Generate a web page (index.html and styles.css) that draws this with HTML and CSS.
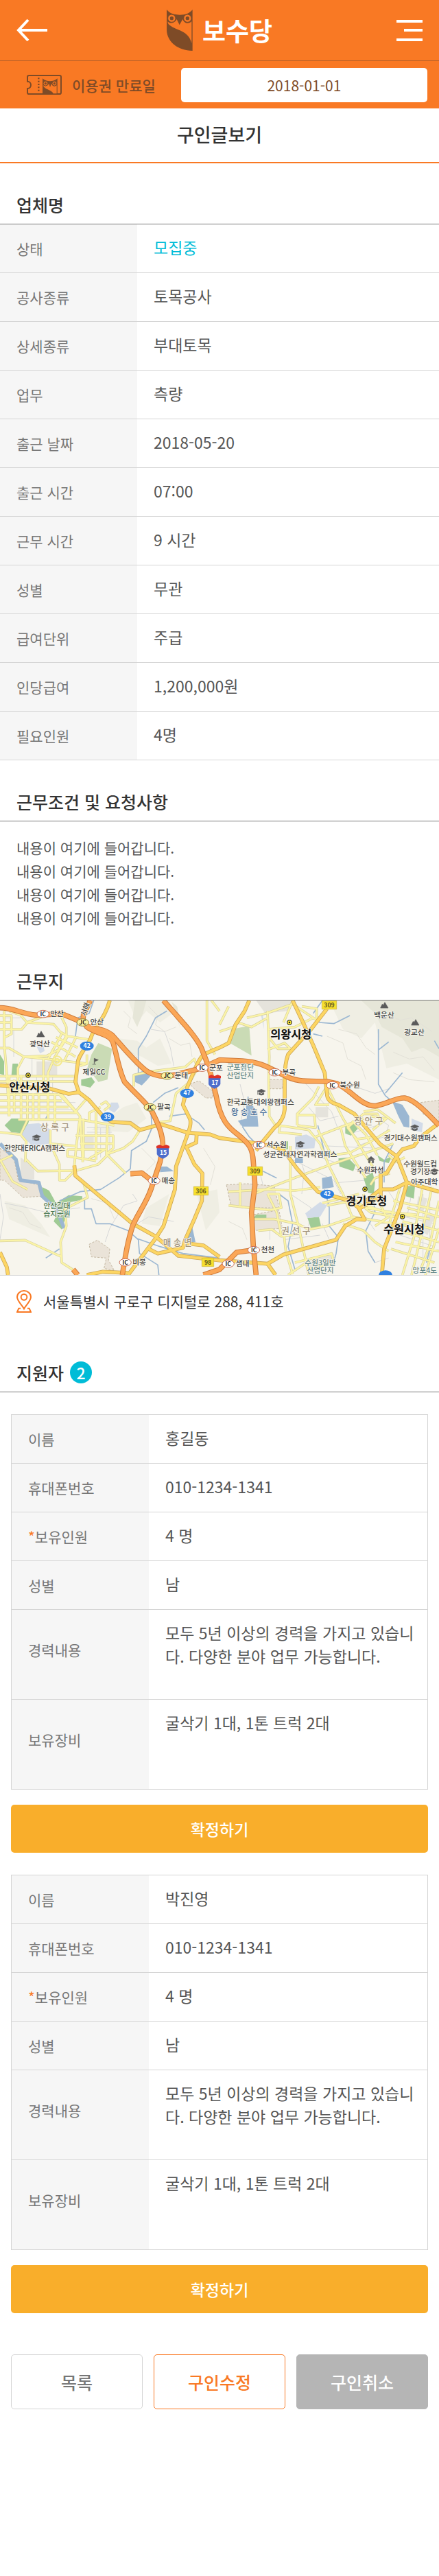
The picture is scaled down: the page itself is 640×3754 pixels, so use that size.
FILE: index.html
```html
<!DOCTYPE html>
<html lang="ko">
<head>
<meta charset="utf-8">
<meta name="viewport" content="width=device-width, initial-scale=1">
<title>구인글보기 - 보수당</title>
<link rel="stylesheet" href="styles.css">
</head>
<body>
<header class="site-header">
  <div class="topbar">
    <button class="icon-button" type="button" aria-label="뒤로">
      <svg class="icon-back" viewBox="0 0 45 34"><path d="M17 2 3 17l14 15M3 17h42"/></svg>
    </button>
    <a class="logo" href="#">
      <svg class="logo-owl" viewBox="0 0 114 180" aria-hidden="true">
        <g id="owl">
          <path class="brown" d="M0 0 C14 17 32 23 57 23 C82 23 99 17 113 0 V180 C45 180 0 137 0 88Z"/>
          <path class="orange" d="M4 52 C15 64 36 60 44 42 L56 67 L70 42 C76 62 98 64 109 51 V147 C96 92 43 90 20 73 C10 67 4 61 4 52Z"/>
          <circle class="eye" cx="22" cy="38" r="17"/><circle class="eye" cx="91" cy="38" r="17"/>
          <circle class="brown" cx="22" cy="38" r="8"/><circle class="brown" cx="91" cy="38" r="8"/>
        </g>
      </svg>
      <span>보수당</span>
    </a>
    <button class="icon-button" type="button" aria-label="메뉴">
      <svg class="icon-menu" viewBox="0 0 38 34"><path d="M0 4h38M11 17h27M0 31h38"/></svg>
    </button>
  </div>
  <div class="passbar">
    <label class="pass-label" for="expiry">
      <svg class="icon-ticket" viewBox="0 0 153 87" aria-hidden="true">
        <path class="ticket-edge" d="M10 3H143Q150 3 150 10V77Q150 84 143 84H10Q3 84 3 77V60C23 60 23 29 3 29V10Q3 3 10 3Z"/>
        <path class="ticket-dots" d="M52 13V77"/>
        <g class="ticket-owl">
          <path class="brown" d="M69 16C86 32 117 32 134 16V84H69Z"/>
          <path class="orange" d="M72 46C84 53 94 46 97 38L102 54 108 38C112 51 122 53 131 46V82H116C108 65 74 64 72 46Z"/>
          <circle class="eye" cx="82" cy="38" r="10"/><circle class="eye" cx="121" cy="38" r="10"/>
          <circle class="brown" cx="82" cy="38" r="5"/><circle class="brown" cx="121" cy="38" r="5"/>
        </g>
      </svg>
      이용권 만료일
    </label>
    <input class="pass-date" id="expiry" type="text" value="2018-01-01" readonly>
  </div>
</header>

<main>
  <h1 class="page-title">구인글보기</h1>

  <section>
    <h2 class="section-title">업체명</h2>
    <table class="details">
      <tr><th scope="row">상태</th><td class="status">모집중</td></tr>
      <tr><th scope="row">공사종류</th><td>토목공사</td></tr>
      <tr><th scope="row">상세종류</th><td>부대토목</td></tr>
      <tr><th scope="row">업무</th><td>측량</td></tr>
      <tr><th scope="row">출근 날짜</th><td>2018-05-20</td></tr>
      <tr><th scope="row">출근 시간</th><td>07:00</td></tr>
      <tr><th scope="row">근무 시간</th><td>9 시간</td></tr>
      <tr><th scope="row">성별</th><td>무관</td></tr>
      <tr><th scope="row">급여단위</th><td>주급</td></tr>
      <tr><th scope="row">인당급여</th><td>1,200,000원</td></tr>
      <tr><th scope="row">필요인원</th><td>4명</td></tr>
    </table>
  </section>

  <section>
    <h2 class="section-title">근무조건 및 요청사항</h2>
    <p class="conditions">내용이 여기에 들어갑니다.<br>내용이 여기에 들어갑니다.<br>내용이 여기에 들어갑니다.<br>내용이 여기에 들어갑니다.</p>
  </section>

  <section>
    <h2 class="section-title">근무지</h2>
    <svg class="map" viewBox="0 0 1920 1200" role="img" aria-label="근무지 지도">
      <defs>
        <g id="minor">
          <path d="M18 100V240L30 380 40 560M0 120H50V200L20 216M0 150H50M0 180H95L120 150 235 158 262 190 296 210 390 225M40 100 90 118 118 150 200 120 265 118 290 170V210L255 270 205 296 105 300 40 262H0M105 300 78 350V460M105 300 190 308 380 330M190 308V460M296 210 240 300 210 370V560M225 235 330 300M245 215 340 260M270 200 210 310M330 220 280 320M380 290V330L350 340"/>
          <path d="M0 385H330M0 408H325M40 380V560M62 400V540M92 380V570M120 460V570M145 460V580M170 460V575M210 460V570M240 460V590M0 465H270L350 560 362 760M0 492H270M0 520H300M0 545H340M80 575H350L500 600M255 460 330 540 375 488M350 560 335 680 325 775M365 570V740M420 540V750M330 645H495V700L465 725M350 680H495M295 705H460L390 745M295 705V735L420 755M470 600 465 730"/>
          <path d="M390 580V545L440 520M440 510 463 496 480 515 455 535M0 630 90 640 115 670 110 760M90 640 120 575M220 620V680L260 770V840H285L325 800 430 770 470 730 550 810M215 680 330 690M110 745 165 800 325 798M0 755 55 730M0 750 55 845 120 880M470 725 540 700 580 670 612 620M700 585 745 580 770 460 830 410M655 365 810 345 850 310 865 350 830 410M585 430V380L655 365"/>
          <path d="M365 850 383 915 285 965 290 1040 265 1110 270 1200 325 1235M0 1105 110 1102 270 1175M905 54V230L940 290M925 54 960 100M960 190 1035 165M960 160 1000 80M1080 130 1165 110 1280 70M1170 100 1178 300 1175 400 1178 560 1205 600M1040 150 1100 170 1170 130M1170 180 1290 170 1370 130M1280 70 1385 140 1385 90 1320 80M1280 54 1240 150M1170 270 1245 240 1270 265 1215 265 1180 220"/>
          <path d="M1430 430 1500 570 1630 780M1395 430 1370 480 1300 550V600M1430 430 1380 510H1440M1300 555H1375L1380 610 1300 600M1220 600 1350 620 1400 680 1440 780 1500 900 1540 1000M1390 620 1450 730 1530 720 1640 660 1705 620M1380 650 1510 600 1590 570M1490 610 1510 690 1560 770 1600 830M1540 580 1600 640 1650 730M1590 550 1520 610 1560 660 1640 650M1590 550 1650 550 1670 590M1225 600 1220 630 1320 640"/>
          <path d="M1110 900 1300 825 1450 770 1600 720 1720 680M1000 890 1160 880 1290 885 1400 870M1270 690V900L1310 1060M1410 940 1570 900M1430 950 1540 930M1000 950 1180 970 1230 960 1220 900 1170 900M1050 850V950M1110 1010H1200L1300 1030 1350 1055 1430 1040 1550 1000M1130 1060 1190 1055 1230 1085 1310 1075M1240 1060 1250 1150 1280 1250M1310 1060 1350 1254M1170 900 1210 980 1230 1080"/>
          <path d="M1545 920 1620 980 1730 1000M1500 1030 1590 1060 1640 1110 1700 1150M1545 1000 1790 1040M1590 900 1600 960 1880 1010M1640 900 1690 1000M1600 950 1690 980 1820 990M1720 930 1920 970M1750 870 1700 1040M1780 960 1920 1000M1760 1020 1920 1060M1740 1060 1920 1110M1730 1110 1920 1150M1710 1140 1900 1200M1850 860 1810 1090 1760 1254M1890 870 1840 1090 1800 1254M1920 930 1880 1120 1840 1230M1920 1050 1860 1254M1700 1000 1640 1040M1620 560 1690 570 1630 620M1590 540 1650 530 1730 590M1705 810 1640 830 1620 860M1700 730 1730 760 1770 740M1290 1200 1450 1160 1460 1200 1340 1230M1260 1254 1340 1200"/>
        </g>
        <g id="major">
          <path d="M480 54C460 130 420 160 400 210 390 250 340 290 340 330L330 410 345 455 390 490 450 560 490 585 570 590 612 620 705 595 820 632 920 640 960 655 1080 672 1190 690 1240 710 1300 790 1390 890 1530 930 1575 965"/>
          <path d="M0 425 220 440 300 462 345 455M325 775 330 820 580 1030 680 1085 780 1170 960 1190 1170 1205 1240 1165 1470 1100 1510 1040 1560 1010 1595 1012 1570 965 1665 910"/>
          <path d="M560 1254 680 1095 715 1040 765 880 770 780 820 640Q840 590 830 570L800 510 820 430 850 360Q870 310 890 290L960 260 1000 240 1030 160 1070 100 1090 54"/>
          <path d="M860 640 858 675 815 695 850 770 885 810 883 930 850 1010 810 1100 800 1135 690 1160 650 1140M810 1115 890 1125 960 1175M0 1155 30 1220 35 1254M380 1254 450 1240 560 1245M1170 1205 1205 1254"/>
          <path d="M1280 54 1330 160 1370 250 1420 370 1430 460Q1430 500 1480 510L1550 550 1660 680 1735 735 1780 850 1750 960 1680 1140 1670 1254M1430 90 1360 180 1260 290Q1245 330 1245 400V530Q1240 580 1200 610L1150 670 1120 710"/>
          <path d="M1735 735 1690 810H1665V880H1720L1780 850 1920 890M1735 735 1760 705 1810 690 1840 650 1920 590M1665 870V930M1665 880 1600 930"/>
        </g>
        <g id="highway">
          <path d="M0 86C60 86 90 112 160 118L270 112 362 150C400 190 440 165 490 205 540 260 600 335 645 365 700 395 740 385 780 375L880 350 960 314 1060 318C1140 322 1180 350 1240 380 1300 415 1360 405 1430 408L1475 418C1540 450 1580 515 1640 515 1700 505 1730 478 1770 480 1820 490 1880 560 1920 600"/>
          <path d="M362 150 365 115 395 54M375 165C410 200 480 195 495 240 510 290 520 360 545 410 590 460 640 500 665 540 690 590 715 640 712 700L700 760 660 880C640 940 600 990 580 1040 560 1100 550 1160 535 1254"/>
          <path d="M715 54C780 130 850 200 880 260L915 350 945 470C965 580 1000 610 1040 640 1090 680 1105 700 1108 760L1115 860 1100 980 1108 1130 1120 1254M570 812 620 808 668 845M890 1254 960 1230 1035 1155 1110 1145M320 1230 340 1254"/>
        </g>
        <path id="peak" d="M-17 12-9-5-5 0 2-13 17 12Z"/>
        <path id="campus" d="M-18-5 0-13 18-5 0 3ZM-11 2V10Q0 16 11 10V2L0 8ZM-16-3V11"/>
        <g id="office"><circle r="11" fill="#222"/><circle r="8" fill="#ffe92e"/><circle r="4" fill="#222"/></g>
        <g id="ic"><ellipse rx="26" ry="16" fill="#fff" stroke="#c96a52" stroke-width="3"/><text class="code" y="9">IC</text></g>
        <g id="jc"><ellipse rx="26" ry="16" fill="#fdf3a0" stroke="#8d8440" stroke-width="3"/><text class="code" y="9">JC</text></g>
        <path id="shield" d="M-26-20H26V12Q20 24 0 32-20 24-26 12Z"/>
      </defs>
      <g transform="translate(0 -54)">
        <rect class="land" y="54" width="1920" height="1200"/>
        <g class="hills">
          <path d="M560 54 600 150 640 100 700 150 770 100 790 180 740 54ZM520 220 600 230 640 260 700 220 750 330 690 340 620 300 560 280ZM1440 54 1500 180 1580 220 1640 150 1690 350 1780 330 1920 400V54Z"/>
          <path class="deep" d="M1580 54 1640 110 1670 170 1760 220 1800 280 1850 260 1920 300V54ZM590 54 580 130 600 170 625 110 640 54ZM750 60 790 160 775 80Z"/>
          <path d="M20 930 110 950 180 1030 220 1090 130 1050 40 1010ZM400 620 540 520 600 500 640 570 560 630ZM860 900 950 880 960 980 900 1060ZM640 960 740 900 700 1040 620 1030Z"/>
        </g>
        <g class="contours"><path d="M540 100 570 130 560 170 600 200M650 80 690 120 680 160 720 190 770 170M740 220 790 250 830 240 840 300M550 260 600 300 590 340M40 960 100 980 130 1030 180 1050M400 920 470 940 500 1010M620 700 680 760 640 800M890 700 940 780 920 860M1430 210 1500 240 1520 310 1580 340 1600 400M1480 180 1560 200 1600 260 1640 290M1720 280 1790 310 1850 300 1900 360M1680 110 1750 140 1800 130 1890 190M1720 370 1790 400 1900 410M1000 1020 1060 1050 1080 1100"/></g>
        <g class="lanes">
          <path d="M660 180 720 190 745 260 760 340M580 900 600 930 540 950 480 1050 460 1110M0 900 15 1000 0 1100M20 940 120 960 200 980 350 960M600 1030 650 1000 760 1020M1050 420 1070 500 1050 600M1330 410 1450 540 1480 620M1260 740 1460 840 1490 900M1300 700 1330 800 1320 900M1350 520 1400 580 1480 560M1430 690 1650 700M1450 790 1480 850 1600 840M1550 430 1640 460 1700 440M1640 560 1700 600 1680 660M1270 900 1360 960 1350 1040M1380 960 1500 930M1180 1030V1100M1240 1100 1400 1080M1700 890 1740 950M1800 900 1780 1000M1600 1000 1640 1060M1410 1030 1440 1100M1640 1200 1700 1180"/>
          <path d="M1850 900V1200M1880 920V1180M1770 1000 1900 1030M1750 1080 1900 1130M10 130H90M60 180V300M140 310V380M160 380V460M230 320V460M100 500H330M100 530H340M440 610V740M480 610V740M380 610H480M380 630H490M1140 820 1160 900M1400 740 1580 800M1520 640 1650 600M1560 690 1680 650"/>
        </g>
        <g class="urban"><path d="M160 320H250V380H160ZM360 650H410V700H360ZM90 740 150 780V835H90ZM1380 520H1435V565H1380ZM1120 54H1280L1260 100 1160 110ZM1330 1200 1460 1160V1210L1370 1254ZM1830 910 1870 920 1850 980 1820 960ZM1870 990 1900 1000 1870 1080 1840 1060Z"/></g>
        <g class="estate"><path d="M0 700 60 740 80 840 170 860 180 910 100 915 20 840 0 840ZM390 1120 425 1102 480 1140 475 1190 500 1235 455 1225 465 1180 400 1175ZM830 420 870 405 930 450 930 480 900 480 850 440ZM990 860 1080 855 1200 865 1220 960 1060 960 1010 950ZM1110 990 1220 970 1235 1050 1110 1060ZM1840 500 1920 490V590L1850 550ZM1180 400 1240 400 1235 440 1180 440Z"/></g>
        <g class="green">
          <path d="M0 290 18 320V380L0 375ZM55 330H78V380H50ZM20 600 50 570 130 570 110 635 50 630ZM185 870 215 885 245 940 300 905 360 910 360 925 310 935 290 990 270 1055 235 1020 250 985 180 900ZM355 400 400 390 415 410 395 435 355 425ZM1510 600 1540 585 1565 615 1535 645 1510 635ZM1480 745 1520 740 1555 775 1545 800 1485 780ZM1590 830 1630 805 1640 850 1635 900 1610 895ZM1345 1005 1395 1000 1405 1045 1360 1050ZM1775 865H1815L1810 920 1775 910ZM1120 990H1165V1005H1110ZM1230 670H1260V705H1225ZM1650 730 1680 750 1715 735 1700 765 1660 755Z"/>
          <path class="soft" d="M400 290 430 240 490 265 470 400 430 410 400 370 380 355ZM1010 180 1090 165 1100 295 1040 260 1005 240Z"/>
        </g>
        <g class="school"><path d="M120 595 170 590 225 620 215 680 140 690 95 640ZM485 500 515 500 522 520 500 545 475 530ZM1290 650 1340 640 1380 660 1375 700 1290 705ZM1800 570 1850 590 1845 630 1800 620ZM160 255 190 250 195 275 175 285ZM1335 985 1400 935 1430 950 1400 1000 1345 1005ZM1140 110 1155 180 1150 120Z"/></g>
        <g class="water">
          <path d="M590 375 630 360 658 385 640 405 620 425 590 410ZM1080 570 1075 500 1085 470 1095 500 1125 540 1130 605 1060 605 1040 580ZM1715 495 1760 510 1790 560 1790 610 1765 605 1740 555ZM1408 830 1450 822 1460 870 1410 878ZM700 780 730 780 760 800 700 805ZM830 1060 840 1040 855 1110 815 1110ZM1290 740 1325 745V765H1290Z"/>
          <path class="river" d="M0 680 70 750 90 840 170 850 185 910 250 970 280 1050"/>
          <path class="stream" d="M730 100 680 130 640 210 605 265 605 370M660 540 665 610 640 670 575 710 570 790 520 830 440 880 350 890 260 930M370 920V965H400L420 1030 480 1030 560 1060 605 1100 610 1160 690 1210 695 1254M670 500 720 460 780 435M740 560 810 550 870 590 895 620M1655 180V420L1685 470 1720 500M1655 270 1700 235M1685 460 1760 370M1395 150 1460 155 1530 120M1370 200 1410 210M1410 54 1370 110M410 54 390 110 340 130 330 210M200 570 215 540M1060 605 1090 650 1110 670M1420 880 1440 960 1440 1040 1480 1090 1470 1160 1450 1230M1220 900 1260 930 1280 1030 1260 1130 1290 1230M1630 900 1640 980 1600 1060 1610 1150 1640 1200M600 1095 700 1130 800 1160 960 1180M1150 800 1210 830M200 1180 260 1140M1720 680 1680 760 1680 850M1390 600 1420 720M1900 230 1920 265M1865 1200 1880 1140"/>
        </g>
        <use href="#minor" class="minor-case"/><use href="#minor" class="minor-fill"/>
        <g class="minor-ring"><circle cx="250" cy="318" r="20"/><circle cx="250" cy="318" r="9"/></g>
        <use href="#major" class="major-case"/><use href="#major" class="major-fill"/>
        <use href="#highway" class="highway-case"/><use href="#highway" class="highway-fill"/>

        <g class="symbols">
          <use href="#peak" x="178" y="201"/><use href="#peak" x="1681" y="75"/><use href="#peak" x="1816" y="150"/>
          <use href="#campus" x="160" y="654"/><use href="#campus" x="1143" y="455"/><use href="#campus" x="1314" y="683"/><use href="#campus" x="1814" y="610"/><use href="#campus" x="1900" y="802"/>
          <path d="M412 333V307L430 314 416 320M404 333H420M1607 749 1623 736 1639 749ZM1612 752V764H1618V754H1628V764H1634V752Z"/>
        </g>
        <use href="#office" x="123" y="381"/><use href="#office" x="1266" y="150"/><use href="#office" x="1596" y="879"/><use href="#office" x="1760" y="999"/>
        <use href="#ic" x="188" y="113"/><use href="#jc" x="362" y="150"/><use href="#jc" x="731" y="383"/><use href="#ic" x="884" y="348"/><use href="#jc" x="656" y="521"/><use href="#ic" x="674" y="842"/><use href="#ic" x="548" y="1199"/><use href="#ic" x="1202" y="368"/><use href="#ic" x="1454" y="425"/><use href="#ic" x="1133" y="686"/><use href="#ic" x="1110" y="1145"/><use href="#ic" x="998" y="1205"/>

        <g class="route-blue"><ellipse cx="380" cy="253" rx="30" ry="20"/><ellipse cx="470" cy="563" rx="30" ry="20"/><ellipse cx="818" cy="460" rx="30" ry="20"/><ellipse cx="1431" cy="901" rx="30" ry="20"/><ellipse cx="1686" cy="1254" rx="30" ry="20"/></g>
        <g class="route-yellow"><path d="M847 868H911V905H847ZM883 1180H935V1217H883ZM1408 56H1472V92H1408ZM1083 781H1148V819H1083Z"/></g>
        <use href="#shield" class="shield" x="712" y="714"/><use href="#shield" class="shield" x="938" y="408"/>
        <path class="shield-top" d="M684 690 697 685 712 690 727 685 741 690V700H684ZM912 384 925 379 938 384 952 379 966 384V394H912Z"/>

        <g class="route-number">
          <text x="380" y="262">42</text><text x="470" y="572">39</text><text x="818" y="469">47</text><text x="1431" y="910">42</text><text x="714" y="730">15</text><text x="940" y="424">17</text>
        </g>
        <g class="route-number dark"><text x="879" y="896">306</text><text x="909" y="1208">98</text><text x="1440" y="83">309</text><text x="1115" y="809">309</text></g>

        <g class="city"><text x="130" y="451">안산시청</text><text x="1273" y="220">의왕시청</text><text x="1603" y="949">경기도청</text><text x="1767" y="1070">수원시청</text></g>
        <g class="place">
          <text x="249" y="123">안산</text><text x="424" y="160">안산</text><text x="174" y="256">광덕산</text><text x="411" y="379">제일CC</text><text x="793" y="394">둔대</text><text x="945" y="359">군포</text><text x="717" y="532">팔곡</text><text x="736" y="853">매송</text><text x="609" y="1209">비봉</text><text x="152" y="711">한양대ERICA캠퍼스</text>
          <text x="1680" y="130">백운산</text><text x="1812" y="204">광교산</text><text x="1264" y="379">부곡</text><text x="1530" y="436">북수원</text><text x="1139" y="509">한국교통대의왕캠퍼스</text><text x="1209" y="697">서수원</text><text x="1312" y="738">성균관대자연과학캠퍼스</text><text x="1796" y="666">경기대수원캠퍼스</text><text x="1838" y="779">수원월드컵</text><text x="1838" y="813">경기장</text><text x="1620" y="808">수원화성</text><text x="1856" y="858">아주대학</text><text x="1171" y="1156">천천</text><text x="1061" y="1215">샘내</text>
        </g>
        <text class="place" transform="translate(384 96) rotate(-72)">서해</text>
        <g class="park"><text x="249" y="963">안산갈대</text><text x="249" y="999">습지공원</text></g>
        <g class="industry"><text x="1051" y="357">군포첨단</text><text x="1051" y="393">산업단지</text><text x="1401" y="1212">수원3일반</text><text x="1401" y="1244">산업단지</text><text x="1858" y="1244">망포4도</text></g>
        <text class="lake" x="1089" y="554">왕 송 호 수</text>
        <g class="district"><text x="240" y="621">상 록 구</text><text x="776" y="1126">매 송 면</text><text x="1612" y="594">장 안 구</text><text x="1294" y="1074">권 선 구</text></g>
      </g>
    </svg>
    <p class="address">
      <svg class="icon-pin" viewBox="0 0 66 99" aria-hidden="true"><path d="M33 82C24 65 3 48 3 31a30 28 0 0 1 60 0C63 48 42 65 33 82Z"/><circle cx="33" cy="31" r="13"/><path d="M18 80H10L3 96H63L56 80H48"/></svg>
      서울특별시 구로구 디지털로 288, 411호
    </p>
  </section>

  <section>
    <h2 class="section-title">지원자 <span class="count">2</span></h2>

    <article class="applicant">
      <table class="details boxed">
        <tr><th scope="row">이름</th><td>홍길동</td></tr>
        <tr><th scope="row">휴대폰번호</th><td>010-1234-1341</td></tr>
        <tr><th scope="row"><span class="required">*</span>보유인원</th><td>4 명</td></tr>
        <tr><th scope="row">성별</th><td>남</td></tr>
        <tr class="tall"><th scope="row">경력내용</th><td>모두 5년 이상의 경력을 가지고 있습니다. 다양한 분야 업무 가능합니다.</td></tr>
        <tr class="tall"><th scope="row">보유장비</th><td>굴삭기 1대, 1톤 트럭 2대</td></tr>
      </table>
      <button class="confirm" type="button">확정하기</button>
    </article>

    <article class="applicant">
      <table class="details boxed">
        <tr><th scope="row">이름</th><td>박진영</td></tr>
        <tr><th scope="row">휴대폰번호</th><td>010-1234-1341</td></tr>
        <tr><th scope="row"><span class="required">*</span>보유인원</th><td>4 명</td></tr>
        <tr><th scope="row">성별</th><td>남</td></tr>
        <tr class="tall"><th scope="row">경력내용</th><td>모두 5년 이상의 경력을 가지고 있습니다. 다양한 분야 업무 가능합니다.</td></tr>
        <tr class="tall"><th scope="row">보유장비</th><td>굴삭기 1대, 1톤 트럭 2대</td></tr>
      </table>
      <button class="confirm" type="button">확정하기</button>
    </article>
  </section>

  <div class="actions">
    <button class="action" type="button">목록</button>
    <button class="action edit" type="button">구인수정</button>
    <button class="action cancel" type="button">구인취소</button>
  </div>
</main>
</body>
</html>
```
FILE: styles.css
```css
* { box-sizing: border-box; }

body {
  margin: 0;
  background: #fff;
  color: #555;
  font-family: "Noto Sans CJK KR", sans-serif;
  font-size: 21px;
  font-weight: 400;
  line-height: 34px;
}

button, input { font-family: inherit; }
h1, h2, p { margin: 0; }

/* Header */
.site-header { background: #f97924; }
.topbar {
  display: grid;
  grid-template-columns: 1fr auto 1fr;
  align-items: center;
  height: 89px;
  padding: 0 24px;
  border-bottom: 1px solid #b86129;
}
.icon-button {
  display: flex;
  padding: 0;
  border: 0;
  background: none;
  cursor: pointer;
}
.icon-button:last-child { justify-self: end; }
.icon-back { width: 45px; height: 34px; }
.icon-menu { width: 38px; height: 34px; }
.icon-back, .icon-menu { fill: none; stroke: #fff; stroke-width: 4; }
.logo {
  display: flex;
  align-items: center;
  gap: 14px;
  color: #fff;
  font-size: 37px;
  font-weight: 700;
  text-decoration: none;
}
.logo-owl { width: 38px; height: 60px; }
.brown { fill: #7e4b27; }
.orange { fill: #f97924; }
.eye { fill: #f97924; stroke: #7e4b27; stroke-width: 3; }

.passbar {
  display: flex;
  align-items: center;
  gap: 37px;
  height: 69px;
  padding: 0 17px 0 39px;
}
.pass-label {
  display: flex;
  align-items: center;
  gap: 15px;
  color: #7e4b27;
  font-weight: 500;
  white-space: nowrap;
}
.icon-ticket { width: 51px; height: 29px; }
.ticket-edge { fill: none; stroke: #7e4b27; stroke-width: 6; }
.ticket-dots { fill: none; stroke: #7e4b27; stroke-width: 7; stroke-dasharray: 6 7; }
.pass-date {
  flex: 1;
  min-width: 0;
  height: 50px;
  border: 0;
  border-radius: 5px;
  background: #fff;
  color: #7e4b27;
  font-size: 21px;
  font-weight: 400;
  text-align: center;
}

/* Headings */
.page-title {
  padding: 20px 0 22px;
  border-bottom: 2px solid #f97924;
  color: #333;
  font-size: 27px;
  font-weight: 500;
  line-height: 36px;
  text-align: center;
}
.section-title {
  display: flex;
  align-items: center;
  gap: 9px;
  padding: 42px 24px 10px;
  border-bottom: 1px solid #777;
  color: #333;
  font-size: 25px;
  font-weight: 500;
  line-height: 36px;
}
.count {
  width: 32px;
  height: 32px;
  border-radius: 50%;
  background: #00bcd7;
  color: #fff;
  font-size: 23px;
  line-height: 32px;
  text-align: center;
}

/* Detail tables */
.details {
  width: 100%;
  border-spacing: 0;
  table-layout: fixed;
}
.details th, .details td {
  height: 71px;
  border-bottom: 1px solid #d5d5d5;
  text-align: left;
}
.details th {
  width: 200px;
  padding: 0 24px;
  background: #f6f6f6;
  color: #777;
  font-weight: 400;
}
.details td {
  padding: 16px 10px 16px 24px;
  font-size: 23px;
  vertical-align: top;
}
.details .status { color: #00bcd7; }
.boxed { border: 1px solid #d5d5d5; border-bottom: 0; }
.boxed td { word-break: break-all; }
.tall th, .tall td { height: 131px; }
.tall th { padding-bottom: 14px; }
.details .required { color: #f97924; }

.conditions { padding: 21px 24px 15px; }

.address {
  display: flex;
  align-items: center;
  gap: 17px;
  padding: 20px 24px 27px;
  color: #333;
}
.icon-pin { width: 22px; height: 33px; fill: none; stroke: #f97924; stroke-width: 6; }

/* Applicants and actions */
.applicant { padding: 32px 16px 0; }
.confirm, .action {
  width: 100%;
  border: 1px solid transparent;
  border-radius: 5px;
  font-weight: 500;
  cursor: pointer;
}
.confirm {
  display: block;
  height: 70px;
  margin-top: 22px;
  background: #f9ae2b;
  color: #fff;
  font-size: 23px;
}
.actions {
  display: grid;
  grid-template-columns: repeat(3, 1fr);
  gap: 16px;
  padding: 60px 16px 243px;
}
.action {
  height: 80px;
  border-color: #d5d5d5;
  background: #fff;
  color: #777;
  font-size: 25px;
}
.edit { border-color: #f97924; color: #f97924; }
.cancel { border-color: #b5b5b5; background: #b5b5b5; color: #fff; }

/* Map */
.map { display: block; width: 100%; border-bottom: 1px solid #d5d5d5; }
.land { fill: #f7f5ed; }
.hills { fill: #efeee3; }
.deep { fill: #e6e6d8; }
.contours { fill: none; stroke: #e3e1d8; stroke-width: 3; }
.lanes { fill: none; stroke: #d7d8d8; stroke-width: 3; }
.urban { fill: #e5e3dc; }
.estate { fill: #eae3d8; stroke: #c4b8a3; stroke-width: 3; stroke-dasharray: 9 6; }
.green { fill: #a0cb95; }
.soft { fill: #cadbb5; }
.school { fill: #d2dbe8; }
.water { fill: #9bb7d2; }
.river, .stream { fill: none; stroke: #9bb7d2; stroke-linejoin: round; }
.river { stroke-width: 16; }
.stream { stroke-width: 5; }
.minor-case, .minor-fill, .major-case, .major-fill, .highway-case, .highway-fill {
  fill: none;
  stroke-linejoin: round;
}
.minor-case { stroke: #d6cf9d; stroke-width: 11; }
.minor-fill { stroke: #fbf4a6; stroke-width: 7; }
.minor-ring { fill: none; stroke: #f3e98f; stroke-width: 6; }
.major-case { stroke: #cda757; stroke-width: 17; }
.major-fill { stroke: #fdd663; stroke-width: 12; }
.highway-case { stroke: #cf7c3c; stroke-width: 23; }
.highway-fill { stroke: #fba757; stroke-width: 17; }
.symbols { fill: #5b5b5b; stroke: #5b5b5b; stroke-width: 2; }
.route-blue { fill: #2f80e0; }
.route-yellow { fill: #f6df2c; stroke: #c9b23b; stroke-width: 2; }
.shield { fill: #4d6dcc; }
.shield-top { fill: #dd3127; }
.map text {
  text-anchor: middle;
  paint-order: stroke;
  stroke: #f8f6ee;
  stroke-width: 5;
  stroke-linejoin: round;
}
.map .code { fill: #222; stroke: none; font-size: 25px; font-weight: 700; }
.map .route-number text { fill: #fff; stroke: none; font-size: 26px; font-weight: 700; }
.map .dark text { fill: #5d5320; }
.city { fill: #111; font-size: 49px; font-weight: 700; }
.place, .park, .industry { fill: #444; font-size: 32px; font-weight: 500; }
.park { fill: #4f7a55; }
.industry { fill: #668a8b; }
.lake { fill: #3d6796; font-size: 35px; font-weight: 500; }
.district { fill: #a2937c; font-size: 38px; font-weight: 500; }
```
